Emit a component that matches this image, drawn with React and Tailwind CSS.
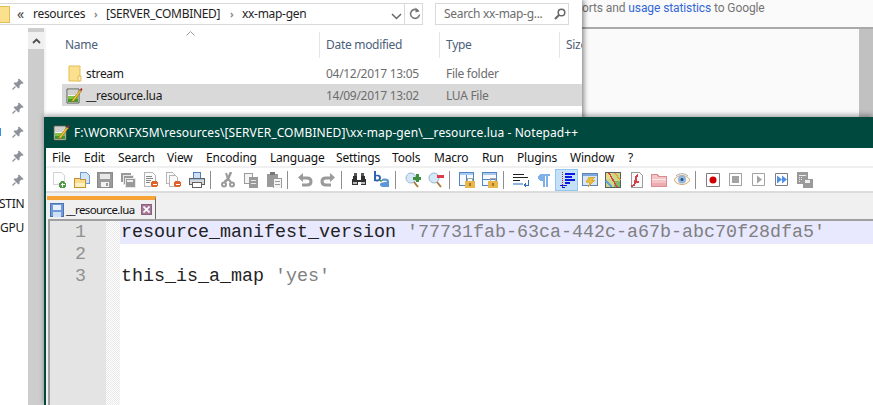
const ui = "font-['Noto_Sans',sans-serif]";

function Ico({ children, size = 16 }) {
  return (
    <svg width={size} height={size} viewBox="0 0 16 16" shapeRendering="crispEdges">
      {children}
    </svg>
  );
}

function FolderIcon() {
  return (
    <svg width="14" height="17" viewBox="0 0 14 17">
      <path d="M1 1h11v15H1z" fill="#fbe08e" stroke="#e3bd57" />
      <path d="M10 11h3v5h-3z" fill="#fff0bd" stroke="#e3bd57" />
    </svg>
  );
}

// the green notepad with the pen, used in the file list and the title bar
function NoteIcon() {
  return (
    <svg width="17" height="17" viewBox="0 0 17 17">
      <path d="M1 2h12v14H1z" fill="#f7f7f2" stroke="#55584f" />
      <path d="M2 3h10M2 5h10M2 7h8" stroke="#aaa" strokeWidth="1" />
      <path d="M2 9h10v6H2z" fill="#7cc441" />
      <path d="M2 12h10v3H2z" fill="#3f9a2c" />
      <path d="M6 13 14 3l1.5 1L8 14l-2.5 1z" fill="#f3c234" stroke="#8d6a1a" strokeWidth=".6" />
      <path d="M14 3l1-2 1.5 1-1 2z" fill="#a82020" />
    </svg>
  );
}

function Pin() {
  return (
    <svg width="12" height="12" viewBox="0 0 12 12">
      <path d="M7 0.5 11.5 5 10.5 6 9.5 5.6 7.6 7.5 7.4 10 6.4 10.6 1.6 5.6 2.2 4.6 4.6 4.4 6.4 2.6 6 1.5z" fill="#8b929b" />
      <path d="M3.5 8.5 0.5 11.5" stroke="#8b929b" strokeWidth="1.2" />
    </svg>
  );
}

function Sep() {
  return (
    <div className="w-[8px] h-full flex items-center">
      <div className="ml-[2px] w-px h-[18px] bg-[#8f8f8f]" />
    </div>
  );
}

function Cell({ active, children }) {
  return (
    <div
      className={
        active
          ? "w-[23px] h-[22px] flex items-center justify-center bg-[#c4e1f8] border border-[#92c8f0]"
          : "w-[23px] h-[22px] flex items-center justify-center"
      }
    >
      {children}
    </div>
  );
}

const G = "#9a9a9a";

const icons = {
  newFile: (
    <Ico>
      <path d="M2.5 .5h8l3 3v9h-11z" fill="#fdfdfd" stroke="#d4d4d4" />
      <circle cx="11.5" cy="12.5" r="3.5" fill="#4f9a45" />
      <path d="M9.5 12.5h4M11.5 10.5v4" stroke="#fff" />
    </Ico>
  ),
  open: (
    <Ico>
      <path d="M6.5 .5h6l3 3v8h-9z" fill="#d4e4f7" stroke="#6f99d0" />
      <path d="M.5 6.5h5l1 1h5v8h-11z" fill="#fbdc8c" stroke="#c98f32" />
      <path d="M1 11h10v4H1z" fill="#fff0c0" />
    </Ico>
  ),
  save: (
    <Ico>
      <path d="M.5.5h15v15H.5z" fill={G} stroke="#8a8a8a" />
      <path d="M3 2h10v5H3z" fill="#e8e8e8" />
      <path d="M4 10h8v5H4z" fill="#f2f2f2" />
      <path d="M9 11h2v3H9z" fill={G} />
    </Ico>
  ),
  saveAll: (
    <Ico>
      <path d="M1 1h10v9H1z" fill={G} />
      <path d="M3.5 3.5h10v9h-10z" fill={G} stroke="#e8e8e8" />
      <path d="M5.5 6.5h10v9h-10z" fill={G} stroke="#e8e8e8" />
      <path d="M7 8h6v2H7z" fill="#eee" />
    </Ico>
  ),
  close: (
    <Ico>
      <path d="M1.5.5h8l3 3v11h-11z" fill="#fbfbfb" stroke="#b5b5b5" />
      <path d="M3 4h6M3 6h7M3 8h5M3 10h4" stroke="#888" />
      <circle cx="11.5" cy="12" r="3.5" fill="#e0622a" />
      <path d="M9.5 12h4" stroke="#fff" />
    </Ico>
  ),
  closeAll: (
    <Ico>
      <path d="M.5.5h6l2 2v9h-8z" fill="#fbfbfb" stroke="#b5b5b5" />
      <path d="M3.5 3.5h6l2 2v9h-8z" fill="#fbfbfb" stroke="#b5b5b5" />
      <circle cx="11.5" cy="12" r="3.5" fill="#e0622a" />
      <path d="M9.5 12h4" stroke="#fff" />
    </Ico>
  ),
  print: (
    <Ico>
      <path d="M4.5.5h7v6h-7z" fill="#cfe0f5" stroke="#4f7fbd" />
      <path d="M.5 6.5h15v6h-15z" fill="#d8d8d8" stroke="#616161" />
      <path d="M3.5 10.5h9v5h-9z" fill="#fff" stroke="#616161" />
      <path d="M1 7h14v1H1z" fill="#9fbfe5" />
    </Ico>
  ),
  cut: (
    <svg width="16" height="16" viewBox="0 0 16 16">
      <path d="M11 0 L8 7 L4.500 10" fill="none" stroke={G} strokeWidth="2.500" />
      <path d="M6 1 L8 7 L11 10" fill="none" stroke={G} strokeWidth="2" />
      <circle cx="4" cy="12.500" r="3" fill={G} />
      <circle cx="12" cy="12.500" r="3" fill={G} />
      <circle cx="4" cy="12.500" r="1" fill="#fff" />
      <circle cx="12" cy="12.500" r="1" fill="#fff" />
    </svg>
  ),
  copy: (
    <Ico>
      <path d="M1.5 1h8v10h-8z" fill="#f4f4f4" stroke={G} />
      <path d="M6 5h9v10.5H6z" fill={G} />
      <path d="M8 8h5v1H8zM8 11h5v1H8z" fill="#e8e8e8" />
    </Ico>
  ),
  paste: (
    <Ico>
      <path d="M1 2h11v13H1z" fill={G} />
      <path d="M4 0h5v3H4z" fill="#777" />
      <path d="M7 6h8.5v10H7z" fill="#f4f4f4" stroke={G} />
      <path d="M9 9h5v1H9zM9 12h5v1H9z" fill={G} />
    </Ico>
  ),
  undo: (
    <svg width="16" height="16" viewBox="0 0 16 16">
      <path d="M5 6h5c3 0 4 2 4 3.500S13 13 10 13H5" fill="none" stroke={G} strokeWidth="3" />
      <path d="M6 1v9L1 5.500z" fill={G} />
    </svg>
  ),
  redo: (
    <svg width="16" height="16" viewBox="0 0 16 16">
      <path d="M11 6H6c-3 0-4 2-4 3.500S3 13 6 13h5" fill="none" stroke={G} strokeWidth="3" />
      <path d="M10 1v9l5-4.500z" fill={G} />
    </svg>
  ),
  find: (
    <Ico>
      <path d="M2 4h4v4h4V4h4l1.500 9h-6v-3h-3v3H.5z" fill="#303030" />
      <path d="M3 1h3v3H3zM10 1h3v3h-3z" fill="#555" />
      <path d="M2 10h4v2H2zM10 10h4v2h-4z" fill="#bbb" />
    </Ico>
  ),
  replace: (
    <svg width="17" height="17" viewBox="0 0 17 17">
      <path d="M1 0h2v4c3-1 5 0 5 3s-3 4-7 3z" fill="#2d62b5" />
      <path d="M3 5.500v3c2 .3 3-.3 3-1.500s-1-2-3-1.500z" fill="#fff" />
      <path d="M9 8c4-1 7 0 7 2v6h-6c-2 0-3-1-3-2.500S8.500 11 14 11c0-1-2-1.500-5-1z" fill="#5b96d8" />
      <path d="M5 9l5 0-2 2z" fill="#4c9a3c" />
    </svg>
  ),
  zoomIn: (
    <svg width="16" height="16" viewBox="0 0 16 16">
      <circle cx="6" cy="6" r="5" fill="#d6e7f7" stroke="#9bb7d4" />
      <path d="M9 10l4 5" stroke="#a97c3c" strokeWidth="2" />
      <path d="M8 5h3V2h3v3h2v3h-2v2h-3V8H8z" fill="#3d8f3d" />
    </svg>
  ),
  zoomOut: (
    <svg width="16" height="16" viewBox="0 0 16 16">
      <circle cx="6" cy="6" r="5" fill="#d6e7f7" stroke="#9bb7d4" />
      <path d="M9 10l4 5" stroke="#a97c3c" strokeWidth="2" />
      <path d="M9 3h7v3H9z" fill="#dd3b4c" />
    </svg>
  ),
  syncV: (
    <Ico>
      <path d="M.5 .5h14v13H.5z" fill="#f7fbff" stroke="#4f86c6" />
      <path d="M1 1h13v2H1z" fill="#a9c9ee" />
      <path d="M7 3v10" stroke="#4f86c6" />
      <path d="M6 9h10v7H6z" fill="#e9b64c" />
      <path d="M8.500 9V6.500h5V9" fill="none" stroke="#a7a7a7" strokeWidth="1.500" />
      <path d="M10 11h2v3h-2z" fill="#a87a22" />
    </Ico>
  ),
  syncH: (
    <Ico>
      <path d="M.5 .5h14v13H.5z" fill="#f7fbff" stroke="#4f86c6" />
      <path d="M1 1h13v2H1z" fill="#a9c9ee" />
      <path d="M1 7h13" stroke="#4f86c6" />
      <path d="M6 9h10v7H6z" fill="#e9b64c" />
      <path d="M8.500 9V6.500h5V9" fill="none" stroke="#a7a7a7" strokeWidth="1.500" />
      <path d="M10 11h2v3h-2z" fill="#a87a22" />
    </Ico>
  ),
  wrap: (
    <Ico>
      <path d="M0 2h11v1H0zM0 5h15v1H0zM0 8h7v1H0z" fill="#222" />
      <path d="M0 11h10v2H0z" fill="#8eb4e3" />
      <path d="M15 8v5h-3" fill="none" stroke="#2f6fc0" />
      <path d="M13 11v4l-3-2z" fill="#2f6fc0" />
    </Ico>
  ),
  para: (
    <Ico>
      <path d="M5 2h9v2h-2v11h-2V4H9v11H7V9C3 9 2 7 2 5.500S3 2 5 2z" fill="#7fb0e8" />
    </Ico>
  ),
  indent: (
    <Ico>
      <path d="M6 1h10v2H6zM6 4h7v2H6zM6 7h10v2H6zM6 10h5v2H6z" fill="#0a18e0" />
      <path d="M3 0h1v1H3zM3 2h1v1H3zM3 4h1v1H3zM3 6h1v1H3zM3 8h1v1H3zM3 10h1v1H3zM3 12h1v1H3zM3 14h1v1H3z" fill="#c62828" />
      <path d="M1 13h7v1H1zM3 15h3v1H3z" fill="#0a18e0" />
    </Ico>
  ),
  light: (
    <Ico>
      <path d="M.5 1.500h15v12H.5z" fill="#d9e6f5" stroke="#5e84b5" />
      <path d="M1 2h14v2H1z" fill="#7aa7dc" />
      <path d="M7 5h6l-3 3h3l-7 7 2-5H4z" fill="#edbe3d" stroke="#c79320" strokeWidth=".5" />
    </Ico>
  ),
  map: (
    <Ico>
      <path d="M.5.500h15v15H.5z" fill="#c9d98a" stroke="#5d5d5d" />
      <path d="M1 1h6v6H1z" fill="#e7d98d" />
      <path d="M9 9h6v6H9z" fill="#7fb96a" />
      <path d="M4 1l8 14" stroke="#d8453d" strokeWidth="1.500" />
      <path d="M1 9l6 6" stroke="#6a9fd8" strokeWidth="1.500" />
      <path d="M10 1l5 7" stroke="#e8a23c" strokeWidth="1.500" />
    </Ico>
  ),
  flash: (
    <Ico>
      <path d="M3.500.5h8l3 3v12h-11z" fill="#fafafa" stroke="#9c9c9c" />
      <path d="M10 2C6 2 7 8 6 11c-.4 1.500-2 2-3 2v2c3 0 4.500-1.500 5-4h3V9H8.500C9 7 9 4.500 10.500 4.500z" fill="#d8404a" />
    </Ico>
  ),
  folderRed: (
    <Ico>
      <path d="M.5 2.500h6l1 2h8v10H.5z" fill="#f4c3c6" stroke="#d98d92" />
      <path d="M1 7h14v1H1z" fill="#fbe9ea" />
      <path d="M1 11h14v3H1z" fill="#eeacb0" />
    </Ico>
  ),
  eye: (
    <svg width="16" height="16" viewBox="0 0 16 16">
      <path d="M0 8c3-6 13-6 16 0-3 6-13 6-16 0z" fill="#f7f4ea" stroke="#d4aa78" />
      <circle cx="8" cy="7.500" r="4" fill="#8fb4dd" />
      <circle cx="8" cy="7.500" r="1.500" fill="#2d4d72" />
      <path d="M2 4c3-3 9-3 12 0" fill="none" stroke="#a4a4a4" />
    </svg>
  ),
  record: (
    <svg width="14" height="14" viewBox="0 0 14 14">
      <path d="M.5.500h13v13H.5z" fill="#fff" stroke="#7e7e7e" />
      <circle cx="7" cy="7" r="3.500" fill="#cf0000" />
    </svg>
  ),
  stop: (
    <svg width="14" height="14" viewBox="0 0 14 14" shapeRendering="crispEdges">
      <path d="M.5.500h12v12H.5z" fill="#fff" stroke="#a3a3a3" />
      <path d="M3 3h7v7H3z" fill="#a3a3a3" />
    </svg>
  ),
  play: (
    <svg width="14" height="14" viewBox="0 0 14 14">
      <path d="M.5.500h12v12H.5z" fill="#fff" stroke="#a3a3a3" />
      <path d="M5 2.500l5 4-5 4z" fill="#a3a3a3" />
    </svg>
  ),
  fast: (
    <svg width="14" height="14" viewBox="0 0 14 14">
      <path d="M.5.500h12v12H.5z" fill="#fff" stroke="#7e7e7e" />
      <path d="M2 2.500l5 4-5 4zM7 2.500l5 4-5 4z" fill="#4f8fe8" />
    </svg>
  ),
  saveMacro: (
    <Ico>
      <path d="M0 0h11v12H0z" fill={G} />
      <path d="M2 3h7v1H2zM2 5h1v1H2zM2 7h1v1H2zM2 9h1v1H2zM4 5h1v1H4zM4 7h1v1H4z" fill="#eee" />
      <path d="M6 7h10v9H6z" fill={G} />
      <path d="M8 8h5v3H8z" fill="#eee" />
    </Ico>
  ),
};

const toolbar = [
  ["newFile", "open", "save", "saveAll", "close", "closeAll", "print"],
  ["cut", "copy", "paste"],
  ["undo", "redo"],
  ["find", "replace"],
  ["zoomIn", "zoomOut"],
  ["syncV", "syncH"],
  ["wrap", "para", "indent", "light", "map", "flash", "folderRed", "eye"],
  ["record", "stop", "play", "fast", "saveMacro"],
];

const menu = [
  ["File", "w-[32px]"],
  ["Edit", "w-[34px]"],
  ["Search", "w-[49px]"],
  ["View", "w-[39px]"],
  ["Encoding", "w-[64px]"],
  ["Language", "w-[66px]"],
  ["Settings", "w-[56px]"],
  ["Tools", "w-[42px]"],
  ["Macro", "w-[48px]"],
  ["Run", "w-[35px]"],
  ["Plugins", "w-[53px]"],
  ["Window", "w-[58px]"],
  ["?", "w-[12px]"],
];

function Explorer() {
  return (
    <div className={`absolute left-0 top-0 w-[582px] h-[405px] bg-white text-[12px] tracking-[-0.3px] ${ui} shadow-[2px_0_5px_rgba(0,0,0,0.45)]`}>
      <div className="flex h-[28px] pt-[3px]">
        <div className="relative w-[423px] h-[22px] border border-l-0 border-[#d9d9d9] flex items-center text-[#1e1e1e]">
          <div className="w-[10px] h-[17px] bg-[#fbe08e] border border-l-0 border-[#e3bd57]" />
          <span className="ml-[7px] w-[16px] text-[14px] leading-[14px] text-[#444]">«</span>
          <span className="w-[61px]">resources</span>
          <span className="w-[12px] text-[#8a8a8a] font-bold text-[10px]">›</span>
          <span className="w-[124px]">[SERVER_COMBINED]</span>
          <span className="w-[12px] text-[#8a8a8a] font-bold text-[10px]">›</span>
          <span className="w-[100px]">xx-map-gen</span>
          <svg className="absolute left-[391px] top-[9px]" width="11" height="7" viewBox="0 0 11 7">
            <path d="M1 1l4.500 4.500L10 1" fill="none" stroke="#666" strokeWidth="1.500" />
          </svg>
          <div className="absolute left-[404px] top-0 w-px h-[20px] bg-[#d9d9d9]" />
          <svg className="absolute left-[409px] top-[3px]" width="12" height="14" viewBox="0 0 12 14">
            <path d="M9.500 4a4.500 4.500 0 1 0 1 3.500" fill="none" stroke="#777" strokeWidth="1.600" />
            <path d="M6.500 .5v5l4-1z" fill="#777" />
          </svg>
        </div>
        <div className="ml-[12px] w-[134px] h-[22px] border border-[#d9d9d9] flex items-center pl-[8px] text-[#6d6d6d]">
          <span className="w-[110px]">Search xx-map-g...</span>
          <svg width="12" height="12" viewBox="0 0 12 12">
            <circle cx="7.500" cy="4.500" r="3.300" fill="none" stroke="#666" strokeWidth="1.500" />
            <path d="M5 7l-4 4" stroke="#666" strokeWidth="2" />
          </svg>
        </div>
      </div>
      <div className="flex">
        <div className="w-[28px] pt-[44px] text-[#1a1a1a]">
          {[0, 1, 2, 3, 4].map((i) => (
            <div key={i} className="relative h-[24px] flex items-center justify-end pr-[4px]">
              {i === 2 && <div className="absolute left-0 top-[8px] w-px h-[8px] bg-[#3b8fe0]" />}
              <Pin />
            </div>
          ))}
          <div className="h-[24px] flex items-center overflow-hidden">
            <span className="-ml-[1px]">STIN</span>
          </div>
          <div className="h-[24px] flex items-center overflow-hidden">
            <span>GPU</span>
          </div>
        </div>
        <div className="w-[16px] h-[377px] bg-[#cdcdcd]">
          <div className="h-[17px] mt-[4px] bg-[#f0f0f0] flex items-center justify-center">
            <svg width="9" height="6" viewBox="0 0 9 6">
              <path d="M1 5l3.500-3.500L8 5" fill="none" stroke="#505050" strokeWidth="1.800" />
            </svg>
          </div>
        </div>
        <div className="flex-1 border-l-2 border-[#f4f4f4] min-w-0">
          <div className="relative h-[30px] flex text-[#4c607a]">
            <svg className="absolute left-[140px] top-[3px]" width="9" height="5" viewBox="0 0 9 5">
              <path d="M.5 4.500l4-4 4 4" fill="none" stroke="#9a9a9a" />
            </svg>
            <div className="w-[274px] h-[26px] mt-[4px] pl-[19px] flex items-center border-r border-[#e5e5e5]">Name</div>
            <div className="w-[120px] h-[26px] mt-[4px] pl-[6px] flex items-center border-r border-[#e5e5e5]">Date modified</div>
            <div className="w-[120px] h-[26px] mt-[4px] pl-[6px] flex items-center border-r border-[#e5e5e5]">Type</div>
            <div className="flex-1 h-[26px] mt-[4px] pl-[6px] flex items-center overflow-hidden">Size</div>
          </div>
          <div className="pl-[16px] pt-[4px]">
            <div className="h-[22px] flex items-center">
              <div className="w-[24px] pl-[6px]"><FolderIcon /></div>
              <span className="w-[240px] pt-px text-[#1a1a1a]">stream</span>
              <span className="w-[120px] pt-px text-[#6d6d6d]">04/12/2017 13:05</span>
              <span className="pt-px text-[#6d6d6d]">File folder</span>
            </div>
            <div className="h-[22px] flex items-center bg-[#d9d9d9]">
              <div className="w-[24px] pl-[4px]"><NoteIcon /></div>
              <span className="w-[240px] pt-px text-[#1a1a1a]">__resource.lua</span>
              <span className="w-[120px] pt-px text-[#6d6d6d]">14/09/2017 13:02</span>
              <span className="pt-px text-[#6d6d6d]">LUA File</span>
            </div>
          </div>
        </div>
      </div>
    </div>
  );
}

function Browser() {
  return (
    <div className="absolute left-[582px] top-0 w-[291px] h-[117px] bg-[#fafafa] flex flex-col">
      <div className="h-[29px] border-b-2 border-[#a9a9a9] pt-[1px] text-[12px] leading-[14px] tracking-[-0.1px] text-[#757575] font-['Roboto',sans-serif] whitespace-nowrap overflow-hidden">
        orts and <span className="text-[#3367d6]">usage statistics</span> to Google
      </div>
      <div className="flex-1 flex justify-end">
        <div className="w-[14px] bg-[#c1c1c1]" />
      </div>
    </div>
  );
}

function Notepad() {
  return (
    <div className={`absolute left-[44px] top-[117px] w-[829px] h-[288px] bg-[#00493f] flex flex-col shadow-[0_-2px_5px_rgba(0,0,0,0.35)] ${ui}`}>
      <div className="h-[31px] flex items-center pl-[9px] text-[12px] tracking-[0.09px] text-white whitespace-nowrap">
        <NoteIcon />
        <span className="ml-[4px]">F:\WORK\FX5M\resources\[SERVER_COMBINED]\xx-map-gen\__resource.lua - Notepad++</span>
      </div>
      <div className="flex-1 ml-[2px] bg-[#f0f0f0] flex flex-col min-h-0">
        <div className="h-[18px] pt-px bg-white flex items-center pl-[6px] text-[12px] tracking-[-0.2px] text-[#111]">
          {menu.map(([label, w]) => (
            <span key={label} className={w}>{label}</span>
          ))}
        </div>
        <div className="h-[25px] mt-[2px] bg-white border-b-2 border-[#dcdcdc] flex items-center pl-[1px]">
          {toolbar.map((group, i) => (
            <div key={i} className="flex items-center h-full">
              {group.map((name) => (
                <Cell key={name} active={name === "indent"}>{icons[name]}</Cell>
              ))}
              {i < toolbar.length - 1 && <Sep />}
            </div>
          ))}
        </div>
        <div className="h-[26px] flex items-end pl-[1px]">
          <div className="w-[109px] h-[23px] border-t-[4px] border-t-[#f7a335] border-r border-r-[#6a6a6a] flex items-center pl-[3px] text-[11.500px] tracking-[-0.6px] text-[#111]">
            <svg width="14" height="14" viewBox="0 0 14 14" shapeRendering="crispEdges">
              <path d="M.5.500h13v13H.5z" fill="#6f9bd8" stroke="#4a75b5" />
              <path d="M3 2h8v5H3z" fill="#e8f0fb" />
              <path d="M3 9h8v5H3z" fill="#cfe0f5" />
            </svg>
            <span className="ml-[2px] w-[75px]">__resource.lua</span>
            <div className="w-[11px] h-[11px] bg-[#a9799a] border border-[#8c6080] flex items-center justify-center">
              <svg width="7" height="7" viewBox="0 0 7 7">
                <path d="M.5.500l6 6M6.500.500l-6 6" stroke="#fff" strokeWidth="1.600" />
              </svg>
            </div>
          </div>
        </div>
        <Editor />
      </div>
    </div>
  );
}

const lines = [
  <>
    <span>resource_manifest_version </span>
    <span className="text-[#808080]">'77731fab-63ca-442c-a67b-abc70f28dfa5'</span>
  </>,
  null,
  <>
    <span>this_is_a_map </span>
    <span className="text-[#808080]">'yes'</span>
  </>,
];

function Editor() {
  return (
    <div className="flex-1 ml-[2px] border-t-2 border-l-2 border-[#a0a0a0] bg-white flex min-h-0 font-['Liberation_Mono',monospace] text-[18.33px] leading-[22px]">
      <div className="w-[56px] bg-[#e4e4e4] pt-[1px] pr-[20px] text-right text-[#919191]">
        {lines.map((_, i) => (
          <div key={i} className="h-[22px]">{i + 1}</div>
        ))}
      </div>
      <div className="w-[14px] bg-[repeating-conic-gradient(#e8e8e8_0_25%,#fff_0_50%)] bg-[length:2px_2px]" />
      <div className="flex-1 pt-[1px] text-[#222] whitespace-pre">
        {lines.map((line, i) => (
          <div key={i} className={i === 0 ? "h-[22px] -mt-[1px] pt-[1px] box-content bg-[#e8e8ff] pl-[1px]" : "h-[22px] pl-[1px]"}>
            {line}
          </div>
        ))}
      </div>
    </div>
  );
}

export default function App() {
  return (
    <div className="relative w-[873px] h-[405px] overflow-hidden bg-white">
      <Browser />
      <Explorer />
      <Notepad />
    </div>
  );
}
